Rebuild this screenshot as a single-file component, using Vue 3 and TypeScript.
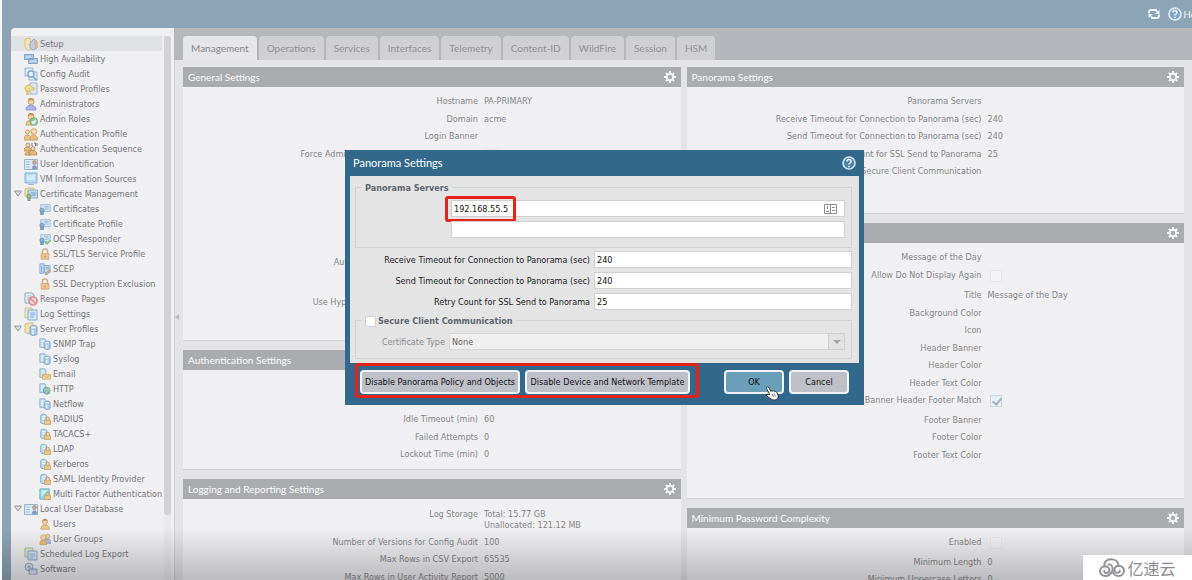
<script setup lang="ts">
import { ref } from 'vue'

interface Shape { d: string; f?: string; s?: string; w?: number }
interface NavItem { label: string; icon: string; sub?: boolean; open?: boolean }
interface Row { label: string; value?: string; value2?: string; check?: boolean; on?: boolean }
interface Panel { title: string; name: string; rows: Row[] }

const blue = '#a9cbe6'
const edge = '#86a9c8'
const gold = '#e9c48c'
const goldEdge = '#cfa267'
const pale = '#e6eef6'

const doc: Shape = { d: 'M1 1h7l2 2v8H1z', f: pale, s: edge }
const docLines: Shape = { d: 'M3 4h5M3 6h5M3 8h4', s: '#a5c2dc' }
const head: Shape = { d: 'M4 4.500a3 3 0 1 1 6 0a3 3 0 0 1-6 0z', f: '#f1d3ae', s: goldEdge }
const hair: Shape = { d: 'M4 4C4 1 6 1 7 1c2 0 3 1 3 3C8 3 6 3 4 4z', f: '#c79558' }
const torso: Shape = { d: 'M2 13c0-3 2-5 5-5s5 2 5 5z', f: '#a9b5ea', s: '#8b9bcf' }
const torsoGold: Shape = { d: 'M2 13c0-3 2-5 5-5s5 2 5 5z', f: '#edc58c', s: goldEdge }
const padlock: Shape[] = [
  { d: 'M8 9V7c0-3 4-3 4 0v2', s: goldEdge, w: 1.4 },
  { d: 'M6.500 8.500h7V13.500h-7z', f: gold, s: goldEdge },
]
const cylinder: Shape[] = [
  { d: 'M6 5c1-2 6-2 7 0v7c-1 2-6 2-7 0z', f: blue, s: '#7ba4cb' },
  { d: 'M7.500 5.500h4M9 8v4', s: '#f2f8fd', w: 1.4 },
]
const serverDoc: Shape[] = [
  { d: 'M1 1h6l1 2v8H1z', f: '#c5dcee', s: '#84aed2' },
  { d: 'M2.500 3.500h4M2.500 6h4M2.500 8.500h4', s: '#f3f8fc' },
]
const certificate: Shape[] = [
  { d: 'M2 2h11v8H2z', f: '#d5e6f4', s: '#93b6d6' },
  { d: 'M6 4.500h5M7 7h4', s: '#83abcf' },
  { d: 'M1 8.500a2.500 2.500 0 1 1 5 0a2.500 2.500 0 0 1-5 0M2 10v4l1.500-1L5 14v-4z', f: '#8eafca', s: '#6d93b5' },
]
const card: Shape[] = [
  { d: 'M.5 2.500h13v10H.5z', f: '#dce9f5', s: '#95b4d2' },
  { d: 'M2 5h4M2 7.500h4M2 10h4', s: '#9dbfe0' },
  { d: 'M8 12c0-5 5-5 5 0z', f: '#8398bf' },
  { d: 'M8.700 5.500a1.800 1.800 0 1 1 3.600 0a1.800 1.800 0 0 1-3.600 0', f: '#d6a97e', s: '#9e8f91' },
]
const icons: Record<string, Shape[]> = {
  setup: [
    { d: 'M1 2l5-1 1 5v6L3 13 1 9z', f: '#f3e3b5', s: '#dcc08a' },
    { d: 'M6 6l4-4 3 3v6l-4 2-3-2z', f: '#bdcfe6', s: '#8ca9ca' },
    { d: 'M10 4l3-1v9l-2-1z', f: '#dfb480' },
  ],
  ha: [
    { d: 'M.5 2.500h9v5h-9zM4.500 6.500h9v5h-9z', f: '#a8c6e2', s: '#7fa5ca' },
    { d: 'M2 5h5M6 9h6', s: '#d9e7f3' },
  ],
  audit: [
    { d: 'M1 1h8v8H1zM5 5h8v8H5z', f: '#d6e7f5', s: '#93b7d8' },
    { d: 'M4 7a3 3 0 1 1 6 0a3 3 0 0 1-6 0M9 9.500l4 4', f: '#eaf4fb', s: '#83a6c4', w: 1.5 },
  ],
  password: [
    { d: 'M6 1h7v11H6z', f: '#dce9f4', s: '#98b7d2' },
    { d: 'M1 6.500C1 3 5 2 7 4l3 2v2H7c-2 3-6 2-6-1.500z', f: '#f0dc8d', s: '#d6bb65' },
    { d: 'M3 8v5M3 12h2', s: '#d6bb65', w: 1.4 },
  ],
  admin: [torso, head, hair],
  roles: [
    torsoGold, head, hair,
    { d: 'M6 9.500a3.800 3.800 0 1 1 7.600 0a3.800 3.800 0 0 1-7.600 0', f: '#8fca98', s: '#6fae7b' },
    { d: 'M8 9.500l1.500 2L12 8', s: '#fff', w: 1.5 },
  ],
  authProfile: [
    { d: 'M0 13c0-3 1-5 3.500-5S7 10 7 13z', f: gold, s: goldEdge },
    { d: 'M1.500 5a2 2 0 1 1 4 0a2 2 0 0 1-4 0', f: '#f4dbb8', s: goldEdge },
    { d: 'M6 13c0-4 1-5 3.700-5S13.500 10 13.500 13z', f: '#e8bb7f', s: goldEdge },
    { d: 'M7 4.500a2.800 2.800 0 1 1 5.600 0a2.800 2.800 0 0 1-5.600 0', f: '#f4dbb8', s: goldEdge },
  ],
  authSequence: [
    { d: 'M0 9c0-3 1-4 3.500-4S7 6 7 9zM5 13c0-4 2-5 4-5s4 2 4 5zM1 13c0-2 1-3 3-3s2 1 2 3z', f: '#e6b981', s: '#c59260' },
    { d: 'M2 3a2 2 0 1 1 4 0a2 2 0 0 1-4 0M7 6.500a2 2 0 1 1 4 0a2 2 0 0 1-4 0', f: '#f3dab7', s: '#bd8f62' },
    { d: 'M8 1v3M10 1h1.500v3M13 1v3', s: '#78797f' },
  ],
  card,
  vm: [
    { d: 'M1 1h12v10H1z', f: '#b3dcf3', s: '#86b3d4' },
    { d: 'M3 3h8v5H3z', f: '#d1edfa' },
    { d: 'M4 12.500h6', s: '#a4b6c6' },
  ],
  certManagement: [
    { d: 'M1 2l3-1h6v7H4v4L1 9z', f: '#f2dfad', s: '#d5b980' },
    { d: 'M4 3h9.500v8H4z', f: '#bdd9ed', s: '#85afd0' },
    { d: 'M7 6h5M8 8h4', s: '#6f9fc6' },
    { d: 'M3 9a2 2 0 1 1 4 0a2 2 0 0 1-4 0M4 11v3l1-1 1 1v-3', f: '#9bbd8d', s: '#7ba072' },
  ],
  cert: certificate,
  certOk: [...certificate, { d: 'M7 10l2.500 2.500L13.500 8', s: '#7cc57e', w: 2 }],
  lock: [
    { d: 'M4 7V4c0-4 6-4 6 0v3', s: '#c8ab82', w: 1.6 },
    { d: 'M2.500 6.500h9v6.500h-9z', f: '#ecc592', s: '#d2a46c' },
    { d: 'M7 9v2', s: '#bb8b56', w: 1.4 },
  ],
  scep: [
    { d: 'M1 1h5v11H1zM6 3h7v8H6z', f: '#c6def0', s: '#7ea9d1' },
    { d: 'M3 3v8M8 5h4M8 7h4', s: '#75a5cd' },
    { d: 'M7 13l5-5 1 2-4 4z', f: '#d7b689', s: '#ad9472' },
  ],
  response: [
    doc, docLines,
    { d: 'M5 9a4 4 0 1 1 8 0a4 4 0 0 1-8 0', f: '#f4dcdd', s: '#dd8b8d', w: 1.7 },
    { d: 'M6.500 6.500l5 5', s: '#dd8b8d', w: 1.7 },
  ],
  log: [
    { d: 'M1 1h7v10H1z', f: '#f0e6c5', s: '#cfc193' },
    { d: 'M4 3h9v10H4z', f: '#d3e6f5', s: '#86add1' },
    { d: 'M6 6h5M6 8h5M6 10h4', s: '#84afd5' },
  ],
  servers: [
    { d: 'M1 2l4-1h4v9l-5 2-3-2z', f: '#f2dfad', s: '#d5b980' },
    ...cylinder,
  ],
  server: [...serverDoc, ...cylinder],
  email: [...serverDoc, { d: 'M4 7.500h9.500V13H4z', f: '#f3d19a', s: '#d7a966' }, { d: 'M4 8l4.700 3L13 8', s: '#d7a966' }],
  http: [
    ...serverDoc,
    { d: 'M5 9a4 4 0 1 1 8 0a4 4 0 0 1-8 0', f: '#88b7c3', s: '#6595ad' },
    { d: 'M6 8l3-1 1 2-2 3M11 6l1 4', s: '#a5cf9d', w: 1.6 },
  ],
  serverLock: [
    { d: 'M2 3c1-2 6-2 7 0v8c-1 2-6 2-7 0z', f: '#c0daee', s: '#7ba7cc' },
    { d: 'M3.500 4h4M3.500 6.500h4', s: '#f3f8fc' },
    ...padlock,
  ],
  mfa: [{ d: 'M1 1h11v12H1z', f: '#8fdcea', s: '#6da8bb' }, { d: 'M3 3h7L3 10z', f: '#c8f2f6' }, ...padlock],
  user: [torsoGold, head, hair],
  groups: [
    { d: 'M6 12c0-4 1-5 4-5s4 2 4 5z', f: '#aec1e4', s: '#8aa1cb' },
    { d: 'M7.500 4a2.500 2.500 0 1 1 5 0a2.500 2.500 0 0 1-5 0', f: '#f0cfa7', s: goldEdge },
    { d: 'M1 13.500c0-4 1-5 4-5s4 2 4 5z', f: '#e9bd80', s: goldEdge },
    { d: 'M2 5a3 3 0 1 1 6 0a3 3 0 0 1-6 0', f: '#f3d9b5', s: goldEdge },
  ],
  schedule: [
    { d: 'M1 1h8v9H1z', f: '#dce7cf', s: '#adc194' },
    { d: 'M4 4h9v9H4z', f: '#cfe2f2', s: '#86abce' },
    { d: 'M6 7h5M6 9h5M6 11h3', s: '#98b9d5' },
  ],
  software: [
    { d: 'M1 5a4 4 0 1 1 8 0a4 4 0 0 1-8 0', f: '#d3dff0', s: '#98acc9' },
    { d: 'M4 5a1 1 0 1 1 2 0a1 1 0 0 1-2 0', s: '#8ea6c6' },
    { d: 'M5 7h8v5H5z', f: '#c3d5ea', s: '#8ba6c6' },
    { d: 'M7 9v3M9 9v3M11 9v3', s: '#e5eef7' },
  ],
}

const nav: NavItem[] = [
  { label: 'Setup', icon: 'setup' },
  { label: 'High Availability', icon: 'ha' },
  { label: 'Config Audit', icon: 'audit' },
  { label: 'Password Profiles', icon: 'password' },
  { label: 'Administrators', icon: 'admin' },
  { label: 'Admin Roles', icon: 'roles' },
  { label: 'Authentication Profile', icon: 'authProfile' },
  { label: 'Authentication Sequence', icon: 'authSequence' },
  { label: 'User Identification', icon: 'card' },
  { label: 'VM Information Sources', icon: 'vm' },
  { label: 'Certificate Management', icon: 'certManagement', open: true },
  { label: 'Certificates', icon: 'cert', sub: true },
  { label: 'Certificate Profile', icon: 'cert', sub: true },
  { label: 'OCSP Responder', icon: 'certOk', sub: true },
  { label: 'SSL/TLS Service Profile', icon: 'lock', sub: true },
  { label: 'SCEP', icon: 'scep', sub: true },
  { label: 'SSL Decryption Exclusion', icon: 'lock', sub: true },
  { label: 'Response Pages', icon: 'response' },
  { label: 'Log Settings', icon: 'log' },
  { label: 'Server Profiles', icon: 'servers', open: true },
  { label: 'SNMP Trap', icon: 'server', sub: true },
  { label: 'Syslog', icon: 'server', sub: true },
  { label: 'Email', icon: 'email', sub: true },
  { label: 'HTTP', icon: 'http', sub: true },
  { label: 'Netflow', icon: 'server', sub: true },
  { label: 'RADIUS', icon: 'serverLock', sub: true },
  { label: 'TACACS+', icon: 'serverLock', sub: true },
  { label: 'LDAP', icon: 'serverLock', sub: true },
  { label: 'Kerberos', icon: 'serverLock', sub: true },
  { label: 'SAML Identity Provider', icon: 'serverLock', sub: true },
  { label: 'Multi Factor Authentication', icon: 'mfa', sub: true },
  { label: 'Local User Database', icon: 'card', open: true },
  { label: 'Users', icon: 'user', sub: true },
  { label: 'User Groups', icon: 'groups', sub: true },
  { label: 'Scheduled Log Export', icon: 'schedule' },
  { label: 'Software', icon: 'software' },
]

const tabs = ['Management', 'Operations', 'Services', 'Interfaces', 'Telemetry', 'Content-ID', 'WildFire', 'Session', 'HSM']
const activeTab = ref('Management')

const columns: Panel[][] = [
  [
    {
      title: 'General Settings', name: 'general',
      rows: [
        { label: 'Hostname', value: 'PA-PRIMARY' },
        { label: 'Domain', value: 'acme' },
        { label: 'Login Banner' },
        { label: 'Force Admins to Acknowledge Login Banner', check: true },
        { label: 'Time Zone' },
        { label: 'Locale' },
        { label: 'Time' },
        { label: 'Latitude' },
        { label: 'Longitude' },
        { label: 'Automatically Acquire Commit Lock', check: true },
        { label: 'Certificate Expiration Check', check: true },
        { label: 'Use Hypervisor Assigned MAC Addresses', check: true },
      ],
    },
    {
      title: 'Authentication Settings', name: 'auth',
      rows: [
        { label: 'Authentication Profile' },
        { label: 'Certificate Profile' },
        { label: 'Idle Timeout (min)', value: '60' },
        { label: 'Failed Attempts', value: '0' },
        { label: 'Lockout Time (min)', value: '0' },
      ],
    },
    {
      title: 'Logging and Reporting Settings', name: 'logging',
      rows: [
        { label: 'Log Storage', value: 'Total: 15.77 GB', value2: 'Unallocated: 121.12 MB' },
        { label: 'Number of Versions for Config Audit', value: '100' },
        { label: 'Max Rows in CSV Export', value: '65535' },
        { label: 'Max Rows in User Activity Report', value: '5000' },
      ],
    },
  ],
  [
    {
      title: 'Panorama Settings', name: 'panorama',
      rows: [
        { label: 'Panorama Servers' },
        { label: 'Receive Timeout for Connection to Panorama (sec)', value: '240' },
        { label: 'Send Timeout for Connection to Panorama (sec)', value: '240' },
        { label: 'Retry Count for SSL Send to Panorama', value: '25' },
        { label: 'Secure Client Communication' },
      ],
    },
    {
      title: 'Banners and Messages', name: 'banners',
      rows: [
        { label: 'Message of the Day' },
        { label: 'Allow Do Not Display Again', check: true },
        { label: 'Title', value: 'Message of the Day' },
        { label: 'Background Color' },
        { label: 'Icon' },
        { label: 'Header Banner' },
        { label: 'Header Color' },
        { label: 'Header Text Color' },
        { label: 'Banner Header Footer Match', check: true, on: true },
        { label: 'Footer Banner' },
        { label: 'Footer Color' },
        { label: 'Footer Text Color' },
      ],
    },
    {
      title: 'Minimum Password Complexity', name: 'password',
      rows: [
        { label: 'Enabled', check: true },
        { label: 'Minimum Length', value: '0' },
        { label: 'Minimum Uppercase Letters', value: '0' },
      ],
    },
  ],
]

const server1 = ref('192.168.55.5')
const server2 = ref('')
const receiveTimeout = ref('240')
const sendTimeout = ref('240')
const retryCount = ref('25')
const secureClient = ref(false)
</script>

<template>
  <div class="page">
    <header class="topbar">
      <button class="top-btn" type="button" aria-label="Refresh">
        <svg width="12" height="10" viewBox="0 0 12 10">
          <path d="M1 4.500V3q0-2 2-2h5l1 2M11 5.500V7q0 2-2 2H4L3 7" fill="none" stroke="#eef4fa" stroke-width="1.800" />
          <path d="M11.500 1v4H7zM.5 9V5H5z" fill="#eef4fa" />
        </svg>
      </button>
      <a class="help" href="#">
        <svg width="14" height="14" viewBox="0 0 14 14">
          <circle cx="7" cy="7" r="6" fill="#7fa6c6" stroke="#e4eef7" stroke-width="1.600" />
          <path d="M5 5.500c0-2.600 4-2.600 4 0C9 7 7 7 7 8.500M7 9.700v1.500" fill="none" stroke="#fff" stroke-width="1.400" />
        </svg>
        <span>Help</span>
      </a>
    </header>

    <div class="body">
      <nav class="sidebar">
        <ul>
          <li v-for="(item, i) in nav" :key="item.label" :class="{ sub: item.sub, open: item.open, selected: i === 0 }">
            <a href="#">
              <svg v-if="item.open" width="8" height="7" viewBox="0 0 8 7">
                <path d="M.5 1h7L4 6z" fill="#dcdcdf" stroke="#9b9ca0" />
              </svg>
              <svg class="icon" viewBox="0 0 14 14">
                <path
                  v-for="(shape, n) in icons[item.icon]" :key="n" :d="shape.d"
                  :fill="shape.f ?? 'none'" :stroke="shape.s ?? 'none'" :stroke-width="shape.w ?? 1"
                />
              </svg>
              <span>{{ item.label }}</span>
            </a>
          </li>
        </ul>
        <div class="track"><div class="thumb"></div></div>
      </nav>

      <main class="main">
        <div class="tabs" role="tablist">
          <button
            v-for="tab in tabs" :key="tab" type="button" role="tab" class="tab"
            :class="{ active: tab === activeTab }" :aria-selected="tab === activeTab" @click="activeTab = tab"
          >{{ tab }}</button>
        </div>
        <div class="content">
          <svg class="splitter" width="4" height="6" viewBox="0 0 4 6"><path d="M4 0v6L0 3z" fill="#b9babd" /></svg>
          <div v-for="(column, c) in columns" :key="c" class="column">
            <section v-for="panel in column" :key="panel.title" class="panel" :class="panel.name">
              <h2>
                <span>{{ panel.title }}</span>
                <button type="button" class="gear" :aria-label="'Edit ' + panel.title">
                  <svg width="12" height="12" viewBox="0 0 12 12">
                    <path d="M6 0v12M0 6h12M1.800 1.800l8.400 8.400M10.200 1.800l-8.400 8.400" stroke="#f6f6f8" stroke-width="1.900" />
                    <circle cx="6" cy="6" r="3.200" fill="#a9abaf" stroke="#f6f6f8" stroke-width="1.900" />
                  </svg>
                </button>
              </h2>
              <dl>
                <div v-for="row in panel.rows" :key="row.label" class="row" :class="{ tall: row.check, double: row.value2 }">
                  <dt>{{ row.label }}</dt>
                  <dd>
                    <input v-if="row.check" type="checkbox" class="flag" :checked="row.on" disabled :aria-label="row.label">
                    <template v-else>{{ row.value }}<br v-if="row.value2">{{ row.value2 }}</template>
                  </dd>
                </div>
              </dl>
            </section>
          </div>
        </div>
      </main>
    </div>

    <div class="shade"></div>

    <form class="dialog" role="dialog" aria-label="Panorama Settings" @submit.prevent>
      <div class="dialog-head">
        <h1>Panorama Settings</h1>
        <button type="button" class="top-btn" aria-label="Help">
          <svg width="14" height="14" viewBox="0 0 14 14">
            <circle cx="7" cy="7" r="6" fill="#4b85b2" stroke="#d6e8f6" stroke-width="1.600" />
            <path d="M5 5.500c0-2.600 4-2.600 4 0C9 7 7 7 7 8.500M7 9.700v1.500" fill="none" stroke="#fff" stroke-width="1.400" />
          </svg>
        </button>
      </div>

      <div class="dialog-body">
        <div class="group servers" role="group" aria-labelledby="servers-title">
          <strong id="servers-title" class="legend">Panorama Servers</strong>
          <div class="server-field">
            <input v-model="server1" type="text" aria-label="Panorama server 1">
            <svg class="card-icon" width="14" height="12" viewBox="0 0 14 12">
              <path d="M.5 1.500h12v9H.5zM6.500 1.500v9" fill="none" stroke="#8e8e90" />
              <path d="M8 4.500h3M8 7.500h3M3.500 3v3M2 8.500h3" fill="none" stroke="#8e8e90" />
            </svg>
            <span class="mark mark-ip"></span>
          </div>
          <div class="server-field"><input v-model="server2" type="text" aria-label="Panorama server 2"></div>
        </div>

        <div class="fields">
          <label for="receive">Receive Timeout for Connection to Panorama (sec)</label>
          <input id="receive" v-model="receiveTimeout" type="text">
          <label for="send">Send Timeout for Connection to Panorama (sec)</label>
          <input id="send" v-model="sendTimeout" type="text">
          <label for="retry">Retry Count for SSL Send to Panorama</label>
          <input id="retry" v-model="retryCount" type="text">
        </div>

        <div class="group secure">
          <label class="legend"><input v-model="secureClient" type="checkbox"><strong>Secure Client Communication</strong></label>
          <div class="cert-row">
            <label for="cert-type">Certificate Type</label>
            <div class="select">
              <select id="cert-type" disabled><option>None</option></select>
              <span class="trigger"><svg width="8" height="4" viewBox="0 0 8 4"><path d="M0 0h8L4 4z" fill="#a3a3a5" /></svg></span>
            </div>
          </div>
        </div>
      </div>

      <div class="dialog-foot">
        <button type="button" class="btn policy">Disable Panorama Policy and Objects</button>
        <button type="button" class="btn template">Disable Device and Network Template</button>
        <span class="spacer"></span>
        <button type="submit" class="btn ok">OK</button>
        <button type="button" class="btn cancel">Cancel</button>
        <span class="mark mark-foot"></span>
        <svg class="cursor" width="14" height="15" viewBox="0 0 14 15">
          <path d="M4.500 8L1.600 2.500Q1 1 2.300.8 3.400.6 4 2L5.800 5.400Q6.500 4.300 7.700 5.200 8.600 4.300 9.700 5.400 11 4.900 11.700 6.300L13.200 9.500Q13.500 12 11.500 13.500 9 15 6.700 13.400L2 10.200Q.6 8.800 2 8.200 3 7.800 4.500 9z" fill="#fff" stroke="#333" />
          <path d="M7 8l1.500 3M9 7.500l1.500 3" stroke="#555" stroke-width=".8" />
        </svg>
      </div>
    </form>

    <div class="brand">
      <svg width="26" height="20" viewBox="0 0 26 20">
        <g fill="none" stroke="#909097" stroke-width="1.900" stroke-linecap="round">
          <path d="M5.500 8.500C4.500 4 8 1.200 12 1.200c4 0 7.500 2.300 7.500 6.300" />
          <path d="M13 13.500c-1.500 3-4 4.500-6.500 4.500C3.500 18 1 16 1 13.200 1 10.500 3.200 8.300 6 8.300c2.600 0 4.400 1.700 4.400 3.700 0 1.800-1.400 3-3 3-1.400 0-2.300-.9-2.300-2" />
          <path d="M9.500 6.500c2.500-.5 4 1.500 4 4v3c1 3 3.500 4.500 6 4.500 3 0 5.500-2.200 5.500-5.200 0-3-2.400-5.100-5.200-5.100-2.600 0-4.300 1.900-4.300 4 0 1.900 1.300 3.200 3 3.200 1.400 0 2.400-.9 2.400-2.100" />
        </g>
      </svg>
      <span>亿速云</span>
    </div>
  </div>
</template>

<style scoped>
* { box-sizing: border-box; }

.page {
  position: relative;
  display: flex;
  flex-direction: column;
  height: 100vh;
  overflow: hidden;
  border-left: 2px solid #f4f6f8;
  background: #8ba5b7;
  color: #85878b;
  font: 9px/12px "DejaVu Sans Condensed", "DejaVu Sans", sans-serif;
}

button, input, select { font: inherit; color: inherit; }
a { color: inherit; text-decoration: none; }
svg { display: block; flex: none; }

.topbar {
  display: flex;
  flex: none;
  justify-content: flex-end;
  align-items: center;
  gap: 8px;
  height: 28px;
  margin-right: -12px;
}
.top-btn { padding: 0; border: 0; background: none; }
.help {
  display: flex;
  align-items: center;
  gap: 1px;
  color: #f1f5f9;
  font: 10px/14px Lato, "Liberation Sans", sans-serif;
}

.body { display: flex; flex: 1; min-height: 0; padding-left: 9px; }

.sidebar {
  position: relative;
  flex: none;
  width: 163px;
  overflow: hidden;
  padding-top: 8px;
  border-radius: 4px 0 0;
  background: #f0eff2;
  color: #76777b;
}
.sidebar ul { margin: 0; padding: 0; list-style: none; }
.sidebar li { width: 151px; white-space: nowrap; }
.sidebar a { display: flex; align-items: center; gap: 2px; height: 15px; padding-left: 13px; }
.sidebar .open a { padding-left: 3px; }
.sidebar .sub a { padding-left: 28px; }
.sidebar .selected { background: #dfe1e5; }
.icon { width: 14px; height: 14px; }
.sub .icon { width: 12px; height: 12px; }
.track { position: absolute; top: 8px; right: 3px; bottom: 0; width: 7px; background: #e9e9eb; }
.thumb { height: 88%; border-radius: 4px; background: #d2d2d4; }

.main { display: flex; flex: 1; flex-direction: column; min-width: 0; background: #e4e4e6; }
.tabs {
  display: flex;
  flex: none;
  align-items: flex-end;
  gap: 2px;
  height: 32px;
  padding-left: 9px;
  background: #b4b7bb;
}
.tab {
  height: 24px;
  padding: 0 8px;
  border: 0;
  border-radius: 4px 4px 0 0;
  background: #d0d0d2;
  color: #909195;
  font: 10px/24px Lato, "Liberation Sans", sans-serif;
}
.tab.active { background: #e6e6e8; color: #86878b; }

.content {
  position: relative;
  display: grid;
  grid-template-columns: 1fr 1fr;
  gap: 6px;
  padding: 7px 8px 0 8px;
  border-left: 1px solid #cfcfd2;
}
.splitter { position: absolute; top: 254px; left: 0; }
.column { display: flex; flex-direction: column; gap: 9px; }
.panel { border-bottom: 1px solid #d3d3d6; background: #f0eff1; }
.panel h2 {
  display: flex;
  align-items: center;
  justify-content: space-between;
  height: 20px;
  margin: 0;
  padding: 0 5px;
  background: #a9abaf;
  color: #fbfbfc;
  font: 10px/20px Lato, "Liberation Sans", sans-serif;
}
.gear { padding: 0; border: 0; background: none; }
.panel dl { margin: 0; padding: 5px 0 0; }
.general dl { min-height: 253px; }
.auth dl { min-height: 99px; }
.panorama dl { min-height: 126px; }
.banners dl { min-height: 255px; }
.logging dl { padding-top: 6px; }

.row { display: grid; grid-template-columns: 295px 1fr; column-gap: 6px; height: 18px; line-height: 18px; }
.row:nth-child(even) { height: 17px; }
.row.tall { height: 20px; }
.row.double { height: 28px; }
.row.double dd { padding-top: 4px; line-height: 11px; }
.row dt { text-align: right; white-space: nowrap; }
.row dd { margin: 0; }
.flag {
  display: block;
  width: 12px;
  height: 12px;
  margin: 4px 0 0 2px;
  appearance: none;
  border: 1px solid #e8e8ec;
  background: #f3f2f5;
}
.flag:checked {
  border-color: #ccd3da;
  background: linear-gradient(#e6edf2, #f0f4f7);
}
.flag:checked::before {
  content: "";
  display: block;
  width: 4px;
  height: 7px;
  margin-left: 3px;
  border: solid #94b8c6;
  border-width: 0 2px 2px 0;
  transform: rotate(40deg);
}

.shade {
  position: absolute;
  right: 0;
  bottom: 0;
  left: 0;
  height: 52px;
  background: linear-gradient(rgba(0, 0, 0, 0), rgba(0, 0, 0, 0.22));
  pointer-events: none;
}

.dialog {
  position: absolute;
  top: 150px;
  left: 343px;
  width: 519px;
  margin: 0;
  padding: 0 5px;
  background: #31688c;
  color: #1b1b1d;
}
.dialog-head { display: flex; align-items: center; justify-content: space-between; height: 26px; padding: 0 3px; }
.dialog-head h1 { margin: 0; color: #fff; font: 11px/28px Lato, "Liberation Sans", sans-serif; }
.dialog-body { padding: 11px 7px 4px 5px; background: #e4e4e4; }
.dialog input[type="text"] {
  width: 100%;
  height: 17px;
  padding: 0 2px;
  border: 1px solid #d0d0d0;
  outline: 0;
  background: #fff;
  color: #111;
}
.group { position: relative; border: 1px solid #d1d1d1; }
.legend {
  position: absolute;
  top: -6px;
  left: 6px;
  display: flex;
  align-items: center;
  padding: 0 3px;
  background: #e4e4e4;
  color: #5c6670;
}
.servers { display: grid; gap: 4px; padding: 12px 6px 9px 95px; }
.server-field { position: relative; display: flex; align-items: center; }
.card-icon { position: absolute; right: 7px; }
.fields {
  display: grid;
  grid-template-columns: 235px 1fr;
  align-items: center;
  gap: 4px;
  padding: 3px 0 10px;
}
.fields label { text-align: right; white-space: nowrap; }
.secure { padding: 12px 6px 8px; }
.legend input {
  width: 11px;
  height: 11px;
  margin: 0 2px 0 0;
  appearance: none;
  border: 1px solid #cfcfcf;
  border-radius: 2px;
  background: #fff;
}
.cert-row { display: grid; grid-template-columns: 83px 1fr; align-items: center; gap: 4px; color: #8a8a8c; }
.cert-row label { text-align: right; white-space: nowrap; }
.select { position: relative; height: 17px; }
.select select {
  width: 100%;
  height: 17px;
  padding: 0 2px;
  appearance: none;
  border: 1px solid #d7d7d7;
  border-radius: 0;
  background: #efefef;
  color: #5f5f61;
  opacity: 1;
}
.trigger {
  position: absolute;
  top: 0;
  right: 0;
  display: grid;
  place-items: center;
  width: 17px;
  height: 17px;
  border: 1px solid #cfcfcf;
  background: #e2e2e2;
}
.dialog-foot { position: relative; display: flex; align-items: center; gap: 5px; height: 42px; padding: 0 10px 4px; }
.spacer { flex: 1; }
.btn {
  height: 24px;
  padding: 0;
  border: 2px solid #f1f4f8;
  border-radius: 4px;
  background: #bfbfc8;
  color: #111;
  white-space: nowrap;
}
.policy { width: 160px; }
.template { width: 165px; }
.ok { width: 60px; background: #6a9fb8; }
.cancel { width: 60px; }
.mark { position: absolute; border: 3px solid #e5231b; border-radius: 3px; pointer-events: none; }
.mark-ip { top: -4px; left: -6px; width: 71px; height: 26px; }
.mark-foot { top: 0; left: 5px; width: 344px; height: 35px; }
.cursor { position: absolute; top: 23px; right: 80px; }

.brand {
  position: absolute;
  right: 0;
  bottom: 0;
  display: flex;
  align-items: center;
  justify-content: center;
  gap: 2px;
  width: 109px;
  height: 25px;
  background: #fff;
  color: #8b8b92;
  font: 16px/24px "Noto Sans CJK SC", sans-serif;
}
</style>

<style>
body { overflow: hidden; background: #8ba5b7; }
</style>
